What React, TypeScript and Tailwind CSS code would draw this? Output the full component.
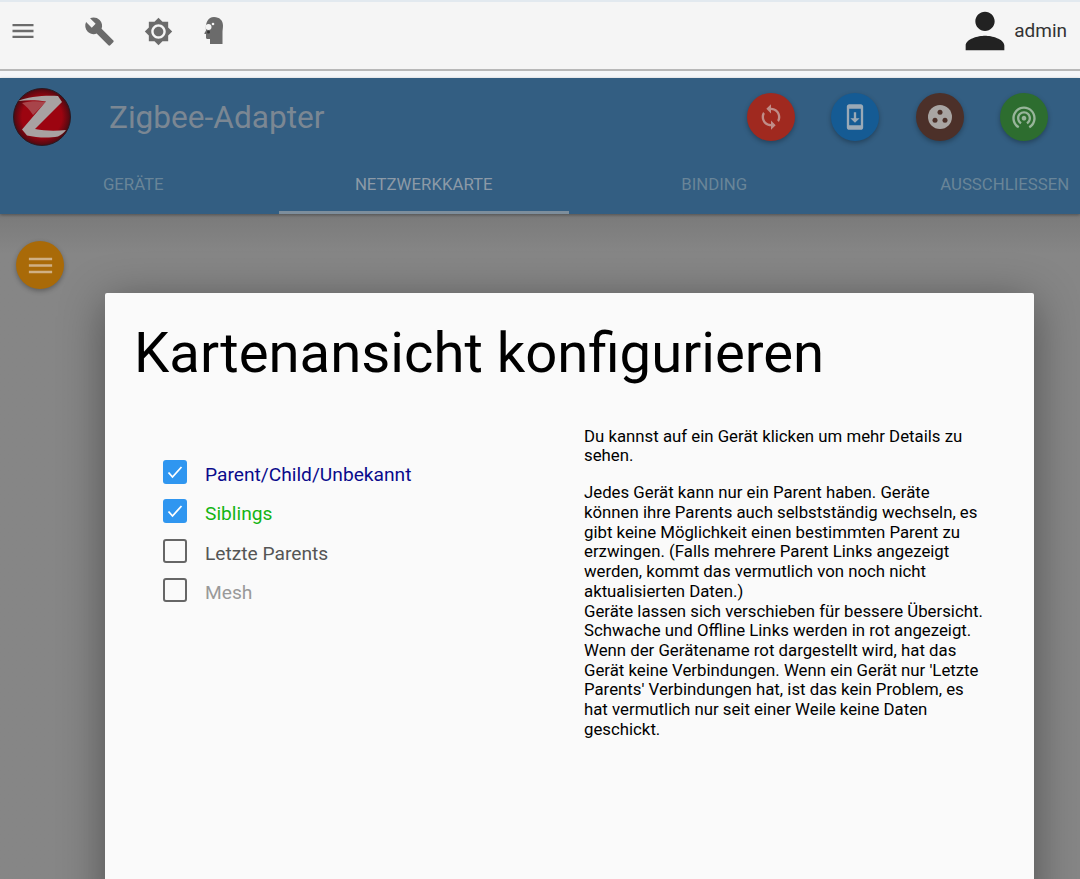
const font = { fontFamily: "Roboto, sans-serif" };

function Icon({ d, className }: { d: string; className: string }) {
  return (
    <svg viewBox="0 0 24 24" className={className} fill="currentColor">
      <path d={d} />
    </svg>
  );
}

const MENU = "M3 18h18v-2H3v2zm0-5h18v-2H3v2zm0-7v2h18V6H3z";
const WRENCH =
  "M22.7 19l-9.1-9.1c.9-2.3.4-5-1.5-6.9-2-2-5-2.4-7.4-1.3L9 6 6 9 1.6 4.7C.4 7.1.9 10.1 2.9 12.1c1.9 1.9 4.6 2.4 6.9 1.5l9.1 9.1c.4.4 1 .4 1.4 0l2.3-2.3c.5-.4.5-1.1.1-1.4z";
const BRIGHTNESS =
  "M20 8.69V4h-4.69L12 .69 8.69 4H4v4.69L.69 12 4 15.31V20h4.69L12 23.31 15.31 20H20v-4.69L23.31 12 20 8.69zM12 18c-3.31 0-6-2.69-6-6s2.69-6 6-6 6 2.69 6 6-2.69 6-6 6zm0-10c-2.21 0-4 1.79-4 4s1.79 4 4 4 4-1.79 4-4-1.79-4-4-4z";
const PERSON =
  "M12 12c2.21 0 4-1.79 4-4s-1.79-4-4-4-4 1.79-4 4 1.79 4 4 4zm0 2c-2.67 0-8 1.34-8 4v2h16v-2c0-2.66-5.33-4-8-4z";
const SYNC =
  "M12 4V1L8 5l4 4V6c3.31 0 6 2.69 6 6 0 1.01-.25 1.97-.7 2.8l1.46 1.46C19.54 15.03 20 13.57 20 12c0-4.42-3.58-8-8-8zm0 14c-3.31 0-6-2.69-6-6 0-1.01.25-1.97.7-2.8L5.24 7.74C4.46 8.97 4 10.43 4 12c0 4.42 3.58 8 8 8v3l4-4-4-4v3z";
const PHONE_UPDATE =
  "M17 1.01L7 1c-1.1 0-2 .9-2 2v18c0 1.1.9 2 2 2h10c1.1 0 2-.9 2-2V3c0-1.1-.9-1.99-2-1.99zM17 19H7V5h10v14zm-1-6h-3V8h-2v5H8l4 4 4-4z";
const TETHER =
  "M12 11c-1.1 0-2 .9-2 2s.9 2 2 2 2-.9 2-2-.9-2-2-2zm6 2c0-3.31-2.69-6-6-6s-6 2.69-6 6c0 2.22 1.21 4.15 3 5.19l1-1.74c-1.19-.7-2-1.97-2-3.45 0-2.21 1.79-4 4-4s4 1.79 4 4c0 1.48-.81 2.75-2 3.45l1 1.74c1.79-1.04 3-2.97 3-5.19zM12 3C6.48 3 2 7.48 2 13c0 3.7 2.01 6.92 4.99 8.65l1-1.73C5.61 18.53 4 15.96 4 13c0-4.42 3.58-8 8-8s8 3.58 8 8c0 2.96-1.61 5.53-4 6.92l1 1.73c2.99-1.73 5-4.95 5-8.65 0-5.52-4.48-10-10-10z";

function HeadIcon() {
  return (
    <svg viewBox="0 0 30 30" className="h-[30px] w-[30px] text-[#6b6b6b]" fill="currentColor">
      <path d="M15 1c5.500 0 9 3.500 9 8.500 0 2.500-.5 4.500-.5 6.500v12H11v-5H8.500c-1 0-1.500-.7-1.500-1.500V18H6c-.5 0-.8-.5-.5-1L7 14.500C6 7 9 1 15 1z" />
      <circle cx="9.500" cy="11" r="3" fill="#f5f5f5" />
      <circle cx="14" cy="8" r="1.300" fill="#f5f5f5" />
      <circle cx="9.500" cy="16" r="1.500" fill="#333" />
    </svg>
  );
}

function ZigbeeLogo() {
  return (
    <svg viewBox="0 0 58 58" className="h-[58px] w-[58px]">
      <defs>
        <radialGradient id="zb" cx="50%" cy="50%" r="50%">
          <stop offset="70%" stopColor="#9c0410" />
          <stop offset="100%" stopColor="#4a0a12" />
        </radialGradient>
      </defs>
      <circle cx="29" cy="29" r="28.500" fill="url(#zb)" stroke="#2a1a22" strokeWidth="1" />
      <path d="M9 15c8-2 16-2 24-1L20 27C17 22 13 18 9 15z" fill="#a8444a" />
      <path
        d="M5 13C15 8 35 7 45 8l4 6-27 27c10 2 21 2 31 1-2 3-5 5-8 6.500-10 2-22 1-31-1l-5-6 24-28C24 12 14 12 5 13z"
        fill="#a8a2a2"
      />
    </svg>
  );
}

function Fab({ bg, children }: { bg: string; children: React.ReactNode }) {
  return (
    <div
      className={`flex h-12 w-12 items-center justify-center rounded-full shadow-[0_2px_5px_rgba(0,0,0,0.3)] ${bg}`}
    >
      {children}
    </div>
  );
}

function Tab({ label, active }: { label: string; active?: boolean }) {
  return (
    <div
      className={`flex h-[58px] w-[290.5px] shrink-0 items-center justify-center border-b-[3px] pt-[2px] text-[16.800px] ${
        active ? "border-[#7d8e9c] text-[#8c9aa7]" : "border-transparent text-[#698598]"
      }`}
    >
      {label}
    </div>
  );
}

function CheckRow({ label, color, checked }: { label: string; color: string; checked?: boolean }) {
  return (
    <div className="flex h-[39.500px] items-center">
      {checked ? (
        <div className="flex h-6 w-6 items-center justify-center rounded-[3px] bg-[#2f96f0]">
          <svg viewBox="0 0 24 24" className="h-6 w-6" fill="none" stroke="#fff" strokeWidth="1.800">
            <path d="M5.500 12.500l4 4.500 9-10" />
          </svg>
        </div>
      ) : (
        <div className="h-6 w-6 rounded-[3px] border-2 border-[#666]" />
      )}
      <span className={`ml-[18px] mt-[7px] text-[19.200px] ${color}`}>{label}</span>
    </div>
  );
}

export default function App() {
  return (
    <div
      className="relative flex h-[879px] w-[1080px] flex-col overflow-hidden bg-[#868686] text-black"
      style={font}
    >
      <div className="h-[2px] bg-[#e2e9ef]" />
      <div className="flex h-[69px] items-center border-b-2 border-[#b8b8b8] bg-[#f5f5f5] pb-[9px] shadow-[0_2px_2px_rgba(0,0,0,0.25)]">
        <Icon d={MENU} className="ml-[9px] h-7 w-7 text-[#6b6b6b]" />
        <Icon d={WRENCH} className="ml-[47px] h-[31px] w-[31px] text-[#6b6b6b]" />
        <Icon d={BRIGHTNESS} className="ml-[29px] h-[29px] w-[29px] text-[#6b6b6b]" />
        <div className="ml-[26px]">
          <HeadIcon />
        </div>
        <div className="ml-auto flex items-center pr-[13px]">
          <Icon d={PERSON} className="h-[58px] w-[58px] text-[#222]" />
          <span className="text-[19px] text-[#333]">admin</span>
        </div>
      </div>
      <div className="h-[7px] bg-[#f4f6f9]" />
      <div className="z-10 shrink-0 bg-[#335e82] shadow-[0_1px_3px_rgba(0,0,0,0.35)]">
        <div className="flex h-[78px] items-center">
          <div className="ml-[13px]">
            <ZigbeeLogo />
          </div>
          <span className="ml-[38px] mt-px text-[31.600px] text-[#7b8793]">Zigbee-Adapter</span>
          <div className="ml-auto flex gap-[36.400px] pr-[32px]">
            <Fab bg="bg-[#a0291f]">
              <Icon d={SYNC} className="h-7 w-7 text-[#c08d88]" />
            </Fab>
            <Fab bg="bg-[#155b94]">
              <Icon d={PHONE_UPDATE} className="h-7 w-7 text-[#9aa9b6]" />
            </Fab>
            <Fab bg="bg-[#4c3029]">
              <svg viewBox="0 0 24 24" className="h-6 w-6">
                <circle cx="12" cy="12" r="12" fill="#a9a5a3" />
                <circle cx="12" cy="7.300" r="2.500" fill="#4c3029" />
                <circle cx="7" cy="15.300" r="2.500" fill="#4c3029" />
                <circle cx="17" cy="15.300" r="2.500" fill="#4c3029" />
              </svg>
            </Fab>
            <Fab bg="bg-[#2d6d2f]">
              <Icon d={TETHER} className="h-7 w-7 text-[#98b59a]" />
            </Fab>
          </div>
        </div>
        <div className="ml-[-12px] flex">
          <Tab label="GERÄTE" />
          <Tab label="NETZWERKKARTE" active />
          <Tab label="BINDING" />
          <Tab label="AUSSCHLIESSEN" />
        </div>
      </div>
      <div className="flex-1 bg-gradient-to-b from-[#7a7a7a] to-[#868686] to-[40px] pl-4 pt-[27px]">
        <Fab bg="bg-[#a96a08]">
          <Icon d={MENU} className="h-[31px] w-[31px] text-[#d0b084]" />
        </Fab>
      </div>
      <div className="absolute left-[105px] top-[293px] z-20 h-[620px] w-[929px] rounded-[2px] bg-[#fafafa] shadow-[0_8px_45px_rgba(0,0,0,0.4)]">
        <div className="pl-[29px] pt-[25px] text-[56.250px] leading-[70px]">Kartenansicht konfigurieren</div>
        <div className="mt-[38.600px] flex">
          <div className="w-[449px] pl-[58px] pt-[25.400px]">
            <CheckRow label="Parent/Child/Unbekannt" color="text-[#0a0a8c]" checked />
            <CheckRow label="Siblings" color="text-[#14b414]" checked />
            <CheckRow label="Letzte Parents" color="text-[#555]" />
            <CheckRow label="Mesh" color="text-[#999]" />
          </div>
          <div className="w-[431.500px] pl-[30px] text-[16.800px] leading-[19.700px]">
            <p>Du kannst auf ein Gerät klicken um mehr Details zu sehen.</p>
            <p className="mt-[17.300px]">
              Jedes Gerät kann nur ein Parent haben. Geräte können ihre Parents auch selbstständig wechseln, es gibt
              keine Möglichkeit einen bestimmten Parent zu erzwingen. (Falls mehrere Parent Links angezeigt werden,
              kommt das vermutlich von noch nicht aktualisierten Daten.)
              <br />
              Geräte lassen sich verschieben für bessere Übersicht. Schwache und Offline Links werden in rot angezeigt.
              Wenn der Gerätename rot dargestellt wird, hat das Gerät keine Verbindungen. Wenn ein Gerät nur 'Letzte
              Parents' Verbindungen hat, ist das kein Problem, es hat vermutlich nur seit einer Weile keine Daten
              geschickt.
            </p>
          </div>
        </div>
      </div>
    </div>
  );
}
